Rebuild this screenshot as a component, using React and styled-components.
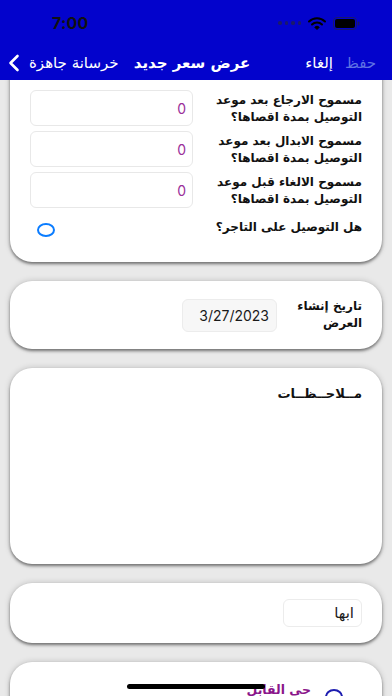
import React from "react";
import styled, { createGlobalStyle } from "styled-components";

const Global = createGlobalStyle`
  html, body { margin: 0; padding: 0; }
  body { background: #e9e9e9; font-family: "DejaVu Sans", "Noto Sans", sans-serif; }
  * { box-sizing: border-box; }
`;

const Screen = styled.div`
  position: relative;
  width: 392px;
  height: 696px;
  overflow: hidden;
  background: #e9e9e9;
  display: flex;
  flex-direction: column;
`;

const Header = styled.header`
  background: #0303cc;
  flex: none;
  height: 80px;
  display: flex;
  flex-direction: column;
  position: relative;
  z-index: 1;
`;

const StatusBar = styled.div`
  height: 46px;
  display: flex;
  align-items: center;
  justify-content: space-between;
  padding: 0 32px 0 52px;
`;

const Time = styled.span`
  font-family: "Inter", "Liberation Sans", sans-serif;
  font-weight: 700;
  font-size: 16px;
  color: #111;
  letter-spacing: 0.2px;
`;

const StatusIcons = styled.div`
  display: flex;
  align-items: center;
  gap: 7px;
`;

const Dots = styled.div`
  display: flex;
  gap: 3px;
  span { width: 3.5px; height: 3.5px; border-radius: 50%; background: #1a1a6a; }
`;

const NavBar = styled.nav`
  flex: 1;
  display: flex;
  align-items: center;
  justify-content: space-between;
  padding: 0 16px 0 8px;
  direction: ltr;
`;

const NavSide = styled.div`
  display: flex;
  align-items: center;
  gap: ${(p) => p.$gap || 6}px;
  min-width: 114px;
  justify-content: ${(p) => (p.$end ? "flex-end" : "flex-start")};
`;

const NavText = styled.span`
  font-size: 15px;
  color: ${(p) => (p.$muted ? "#5f72e4" : "#ffffff")};
  font-weight: ${(p) => (p.$bold ? 700 : 400)};
  white-space: nowrap;
`;

const Content = styled.main`
  flex: 1;
  overflow: hidden;
`;

const List = styled.div`
  display: flex;
  flex-direction: column;
  gap: 19px;
  padding: 0 10px;
  margin-top: -28px;
  direction: rtl;
`;

const Card = styled.section`
  background: #fff;
  border-radius: 22px;
  box-shadow: 0 2px 3px rgba(0, 0, 0, 0.45), 0 0 6px rgba(0, 0, 0, 0.18);
  padding: ${(p) => p.$pad || "16px 20px"};
  min-height: ${(p) => p.$h || 0}px;
  display: flex;
  flex-direction: column;
  gap: ${(p) => p.$gap || 0}px;
`;

const Row = styled.div`
  display: flex;
  align-items: ${(p) => p.$align || "flex-start"};
  justify-content: ${(p) => p.$justify || "space-between"};
  gap: ${(p) => p.$gap || 0}px;
`;

const Label = styled.div`
  font-weight: 700;
  font-size: 12px;
  line-height: 17px;
  color: #111;
  padding-top: ${(p) => p.$pt || 0}px;
  white-space: nowrap;
  width: ${(p) => (p.$w ? `${p.$w}px` : "auto")};
  flex: none;
`;

const NumInput = styled.div`
  width: 163px;
  height: 36px;
  border: 1px solid #e8e8e8;
  border-radius: 6px;
  background: #fff;
  display: flex;
  align-items: center;
  padding: 0 6px;
  color: #9a2f9a;
  font-family: "Inter", "Liberation Sans", sans-serif;
  font-size: 14px;
`;

const ValueBox = styled.div`
  width: ${(p) => p.$w}px;
  height: ${(p) => p.$h}px;
  border: 1px solid #ececec;
  border-radius: 6px;
  background: ${(p) => p.$bg || "#fff"};
  display: flex;
  align-items: center;
  padding: 0 7px;
  color: #1a1a1a;
  font-size: ${(p) => p.$fs || 14}px;
  font-family: ${(p) => (p.$latin ? '"Inter", "Liberation Sans", sans-serif' : "inherit")};
`;

const Radio = styled.span`
  width: ${(p) => p.$w || 18}px;
  height: ${(p) => p.$h || 14}px;
  border: 2.5px solid ${(p) => p.$color || "#0a7cff"};
  border-radius: 50%;
  display: inline-block;
  flex: none;
  margin-top: ${(p) => p.$mt || 0}px;
  margin-left: ${(p) => p.$ml || 0}px;
`;

const Title = styled.div`
  font-weight: 700;
  font-size: 13px;
  color: #111;
  padding-top: 2px;
`;

const Purple = styled.div`
  font-weight: 700;
  font-size: 12.5px;
  color: #8a168a;
`;

const HomeIndicator = styled.div`
  position: absolute;
  left: 127px;
  bottom: 7px;
  width: 138px;
  height: 5px;
  border-radius: 3px;
  background: #000;
  z-index: 2;
`;

const rows = [
  ["مسموح الارجاع بعد موعد", "التوصيل بمدة اقصاها؟"],
  ["مسموح الابدال بعد موعد", "التوصيل بمدة اقصاها؟"],
  ["مسموح الالغاء قبل موعد", "التوصيل بمدة اقصاها؟"],
];

export default function App() {
  return (
    <>
      <Global />
      <Screen>
        <Header>
          <StatusBar>
            <Time>7:00</Time>
            <StatusIcons>
              <Dots>
                <span />
                <span />
                <span />
                <span />
              </Dots>
              <svg width="18" height="13" viewBox="0 0 18 13">
                <path d="M1 4.5 A11.5 11.5 0 0 1 17 4.5" stroke="#000" strokeWidth="2" fill="none" strokeLinecap="round" />
                <path d="M4 7.5 A7 7 0 0 1 14 7.5" stroke="#000" strokeWidth="2" fill="none" strokeLinecap="round" />
                <path d="M6.8 10.3 A3 3 0 0 1 11.2 10.3 L9 12.5 Z" fill="#000" stroke="#000" strokeWidth="1" strokeLinejoin="round" />
              </svg>
              <svg width="27" height="13" viewBox="0 0 27 13">
                <rect x="0.5" y="0.5" width="23" height="12" rx="3.5" fill="none" stroke="#1a1a6a" strokeWidth="1" />
                <rect x="2" y="2" width="20" height="9" rx="2" fill="#000" />
                <rect x="24.8" y="4.5" width="1.6" height="4" rx="0.8" fill="#1a1a6a" />
              </svg>
            </StatusIcons>
          </StatusBar>
          <NavBar>
            <NavSide $gap={9}>
              <svg width="12" height="18" viewBox="0 0 12 18">
                <path d="M9.5 2 L2.5 9 L9.5 16" stroke="#fff" strokeWidth="2.6" fill="none" strokeLinecap="round" strokeLinejoin="round" />
              </svg>
              <NavText>خرسانة جاهزة</NavText>
            </NavSide>
            <NavText $bold>عرض سعر جديد</NavText>
            <NavSide $end $gap={12}>
              <NavText>إلغاء</NavText>
              <NavText $muted>حفظ</NavText>
            </NavSide>
          </NavBar>
        </Header>
        <Content>
          <List>
            <Card $pad="38px 20px 25px" $gap={5}>
              {rows.map((r, i) => (
                <Row key={i}>
                  <Label $pt={2}>
                    {r[0]}
                    <br />
                    {r[1]}
                  </Label>
                  <NumInput>0</NumInput>
                </Row>
              ))}
              <Row>
                <Label $pt={6}>هل التوصيل على التاجر؟</Label>
                <Radio $mt={10} $ml={7} />
              </Row>
            </Card>
            <Card $pad="17px 20px" $h={66}>
              <Row $align="center" $justify="flex-start">
                <Label $w={85}>
                  تاريخ إنشاء
                  <br />
                  العرض
                </Label>
                <ValueBox $w={95} $h={33} $bg="#f7f7f7" $latin>
                  3/27/2023
                </ValueBox>
              </Row>
            </Card>
            <Card $pad="16px 20px" $h={196}>
              <Title>مــلاحــظــات</Title>
            </Card>
            <Card $pad="16px 20px" $h={60}>
              <ValueBox $w={79} $h={28} $fs={15}>
                ابها
              </ValueBox>
            </Card>
            <Card $pad="20px 39px" $h={80}>
              <Row $justify="flex-start" $gap={14}>
                <Radio $color="#1d1db0" $w={18} $h={16} $mt={7} />
                <Purple>حي القابل</Purple>
              </Row>
            </Card>
          </List>
        </Content>
        <HomeIndicator />
      </Screen>
    </>
  );
}
